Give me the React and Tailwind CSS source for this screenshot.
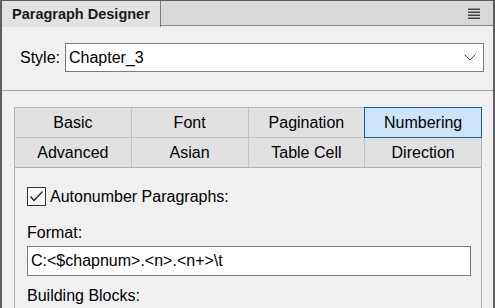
import React from "react";

const tabs1 = ["Basic", "Font", "Pagination", "Numbering"];
const tabs2 = ["Advanced", "Asian", "Table Cell", "Direction"];

function Cell({ label, active }) {
  return (
    <div
      className={
        active
          ? "relative z-10 flex h-[29px] items-center justify-center bg-[#cce4f7] shadow-[0_0_0_1px_#1c5e9a]"
          : "flex h-[29px] items-center justify-center bg-[#e1e1e1]"
      }
    >
      {label}
    </div>
  );
}

export default function App() {
  return (
    <div className="h-[308px] w-[495px] overflow-hidden border-x-2 border-t border-[#5e5e5e] bg-[#f0f0f0] font-['Liberation_Sans',Arial,sans-serif] text-[16px] leading-[18px] text-black">
      {/* header */}
      <div className="flex h-[26px]">
        <div className="flex w-[159px] items-center border-r border-[#7c7c7c] bg-[#e2e2e2] pl-[10px] text-[14.5px] font-bold text-[#1a1a1a]">
          Paragraph Designer
        </div>
        <div className="flex h-[25px] flex-1 items-center justify-end border-b border-[#8a8a8a] bg-[#d9d9d9] pr-[13px]">
          <svg width="12" height="11" viewBox="0 0 12 11">
            <rect x="0" y="0.5" width="12" height="1.5" fill="#444" />
            <rect x="0" y="3.5" width="12" height="1.5" fill="#444" />
            <rect x="0" y="6.5" width="12" height="1.5" fill="#444" />
            <rect x="0" y="9.5" width="12" height="1.5" fill="#444" />
          </svg>
        </div>
      </div>

      {/* style row */}
      <div className="mt-[16px] flex items-center pl-[18px]">
        <span className="w-[45px]">Style:</span>
        <div className="flex h-[29px] w-[419px] items-center justify-between border border-[#7a7a7a] bg-white pl-[3px] pr-[7px]">
          <span>Chapter_3</span>
          <svg width="12" height="7" viewBox="0 0 12 7">
            <polyline points="0.5,0.5 6,6 11.5,0.5" fill="none" stroke="#444" strokeWidth="1" />
          </svg>
        </div>
      </div>

      {/* separator */}
      <div className="mt-[18px] h-px bg-[#a6a6a6]" />

      {/* tabs */}
      <div className="ml-[12px] mt-[16px] w-[468px]">
        <div className="grid grid-cols-4 gap-px border border-[#b4b4b4] bg-[#c4c4c4]">
          {tabs1.map((t) => (
            <Cell key={t} label={t} active={t === "Numbering"} />
          ))}
          {tabs2.map((t) => (
            <Cell key={t} label={t} />
          ))}
        </div>

        {/* panel */}
        <div className="h-[200px] w-[468px] border-x border-[#b0b0b0] pl-[12px] pt-[19px]">
          <div className="flex items-center gap-[4px]">
            <div className="flex h-[19px] w-[19px] items-center justify-center border border-[#333] bg-[#f7f7f7]">
              <svg width="15" height="13" viewBox="0 0 15 13">
                <polyline points="1.5,6.5 5,10.5 13.5,1.5" fill="none" stroke="#222" strokeWidth="1.3" />
              </svg>
            </div>
            <span>Autonumber Paragraphs:</span>
          </div>
          <div className="mt-[18px]">Format:</div>
          <div className="mt-[4px] flex h-[30px] w-[444px] items-center border border-[#7a7a7a] bg-white pl-[3px]">
            C:&lt;$chapnum&gt;.&lt;n&gt;.&lt;n+&gt;\t
          </div>
          <div className="mt-[11px]">Building Blocks:</div>
        </div>
      </div>
    </div>
  );
}
